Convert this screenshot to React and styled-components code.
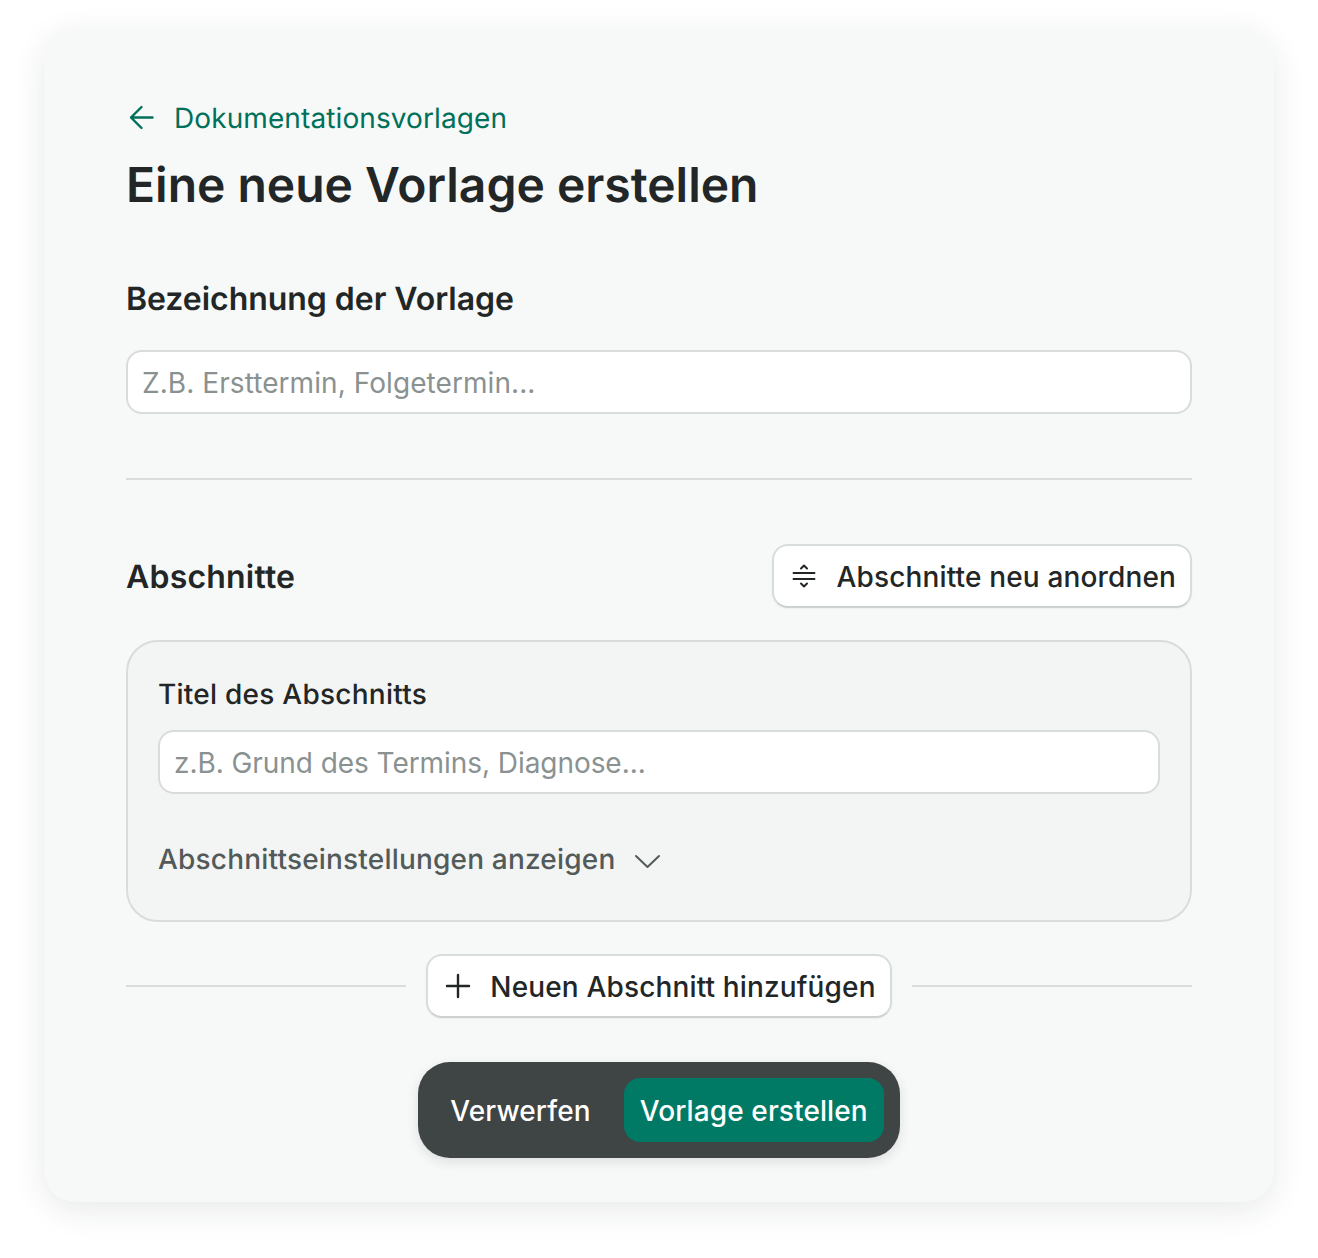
import React from "react";
import styled, { createGlobalStyle } from "styled-components";

const GlobalStyle = createGlobalStyle`
  html, body {
    margin: 0;
    background: #fff;
    font-family: Inter, "Liberation Sans", sans-serif;
    color: #222626;
    text-rendering: geometricPrecision;
  }
  * { box-sizing: border-box; }
  input::placeholder { color: #8a9191; opacity: 1; }
`;

const Page = styled.div`
  width: 1318px;
  height: 1258px;
  padding: 28px 44px 56px;
`;

const Card = styled.main`
  height: 1174px;
  padding: 70px 82px 44px;
  background: #f7f9f8;
  border-radius: 32px;
  box-shadow: 0 8px 32px rgba(30, 40, 40, 0.1);
  display: flex;
  flex-direction: column;
`;

const BackLink = styled.a`
  display: flex;
  align-items: center;
  gap: 16px;
  height: 40px;
  color: #00705a;
  font-size: 28px;
  line-height: 40px;
  letter-spacing: 0.1px;
`;

const Title = styled.h1`
  margin: 19px 0 0;
  font-size: 48px;
  line-height: 56px;
  font-weight: 600;
`;

const FieldHeading = styled.h2`
  margin: 66px 0 31px;
  font-size: 32px;
  line-height: 40px;
  font-weight: 600;
  letter-spacing: -0.04px;
`;

const TextInput = styled.input`
  display: block;
  width: 100%;
  height: 64px;
  padding: 2px 14px 0;
  background: #fff;
  border: 2px solid #d8dcdb;
  border-radius: 16px;
  font: 400 28px Inter, sans-serif;
  letter-spacing: ${(p) => p.$spacing}px;
  color: #222626;
  outline: none;
`;

const Divider = styled.hr`
  margin: 64px 0;
  border: 0;
  height: 2px;
  background: #d8dcdb;
`;

const SectionHeader = styled.div`
  display: flex;
  align-items: center;
  justify-content: space-between;
`;

const SectionTitle = styled.h2`
  margin: 0;
  padding-top: 2px;
  font-size: 32px;
  line-height: 40px;
  font-weight: 600;
  letter-spacing: 0.2px;
`;

const OutlineButton = styled.button`
  display: flex;
  align-items: center;
  gap: 16px;
  height: 64px;
  padding: 0 14px;
  background: #fff;
  border: 2px solid #d8dcdb;
  border-bottom-color: #cdd1d0;
  border-radius: 16px;
  box-shadow: 0 1px 2px rgba(30, 40, 40, 0.05);
  color: #222626;
  font: 500 28px Inter, sans-serif;
  letter-spacing: 0.15px;
  white-space: nowrap;
`;

const ButtonLabel = styled.span`
  padding-top: 2px;
`;

const Panel = styled.section`
  margin-top: 32px;
  height: 282px;
  padding: 30px;
  background: #f3f5f4;
  border: 2px solid #d8dcdb;
  border-radius: 32px;
`;

const PanelLabel = styled.div`
  height: 44px;
  margin-bottom: 14px;
  font-size: 28px;
  line-height: 44px;
  font-weight: 500;
  letter-spacing: 0.25px;
`;

const Disclosure = styled.div`
  display: flex;
  align-items: center;
  gap: 16px;
  height: 40px;
  margin-top: 46px;
  color: #525a5a;
  font-size: 28px;
  font-weight: 500;
  letter-spacing: 0.19px;
`;

const DisclosureLabel = styled.span`
  padding-bottom: 2px;
`;

const AddRow = styled.div`
  display: flex;
  align-items: center;
  gap: 20px;
  margin-top: 32px;
`;

const RowLine = styled.div`
  flex: 1;
  height: 2px;
  background: #d8dcdb;
`;

const ActionBar = styled.div`
  align-self: center;
  display: flex;
  align-items: center;
  gap: 17px;
  height: 96px;
  margin-top: 44px;
  padding: 16px;
  background: #3f4444;
  border-radius: 32px;
  box-shadow: 0 4px 12px rgba(30, 40, 40, 0.12);
`;

const BarButton = styled.button`
  height: 64px;
  padding: 2px 16px 0;
  border: 0;
  border-radius: 16px;
  background: ${(p) => (p.$primary ? "#007a65" : "transparent")};
  color: #fff;
  font: 500 28px Inter, sans-serif;
  letter-spacing: 0.11px;
  white-space: nowrap;
`;

function Icon({ color = "#222626", width = 2, children }) {
  return (
    <svg width="32" height="32" viewBox="0 0 32 32" fill="none" stroke={color} strokeWidth={width} strokeLinecap="round" strokeLinejoin="round">
      {children}
    </svg>
  );
}

export default function App() {
  return (
    <Page>
      <GlobalStyle />
      <Card>
        <BackLink>
          <Icon color="#00705a" width={2.4}>
            <path d="M26.500 15.500H5M15.500 5 5 15.500 15.500 26" />
          </Icon>
          Dokumentationsvorlagen
        </BackLink>
        <Title>Eine neue Vorlage erstellen</Title>

        <FieldHeading>Bezeichnung der Vorlage</FieldHeading>
        <TextInput $spacing={0.07} placeholder="Z.B. Ersttermin, Folgetermin..." />

        <Divider />

        <SectionHeader>
          <SectionTitle>Abschnitte</SectionTitle>
          <OutlineButton>
            <Icon>
              <path d="M5.500 13h21M5.500 19h21" />
              <path d="M13 8.500 16 5.500 19 8.500M13 23.500 16 26.500 19 23.500" />
            </Icon>
            <ButtonLabel>Abschnitte neu anordnen</ButtonLabel>
          </OutlineButton>
        </SectionHeader>

        <Panel>
          <PanelLabel>Titel des Abschnitts</PanelLabel>
          <TextInput $spacing={-0.06} placeholder="z.B. Grund des Termins, Diagnose..." />
          <Disclosure>
            <DisclosureLabel>Abschnittseinstellungen anzeigen</DisclosureLabel>
            <Icon color="#525a5a">
              <path d="M5 12 16.500 23 28 12" />
            </Icon>
          </Disclosure>
        </Panel>

        <AddRow>
          <RowLine />
          <OutlineButton>
            <Icon width={2.4}>
              <path d="M5 16h22M16 5v22" />
            </Icon>
            <ButtonLabel>Neuen Abschnitt hinzufügen</ButtonLabel>
          </OutlineButton>
          <RowLine />
        </AddRow>

        <ActionBar>
          <BarButton>Verwerfen</BarButton>
          <BarButton $primary>Vorlage erstellen</BarButton>
        </ActionBar>
      </Card>
    </Page>
  );
}
